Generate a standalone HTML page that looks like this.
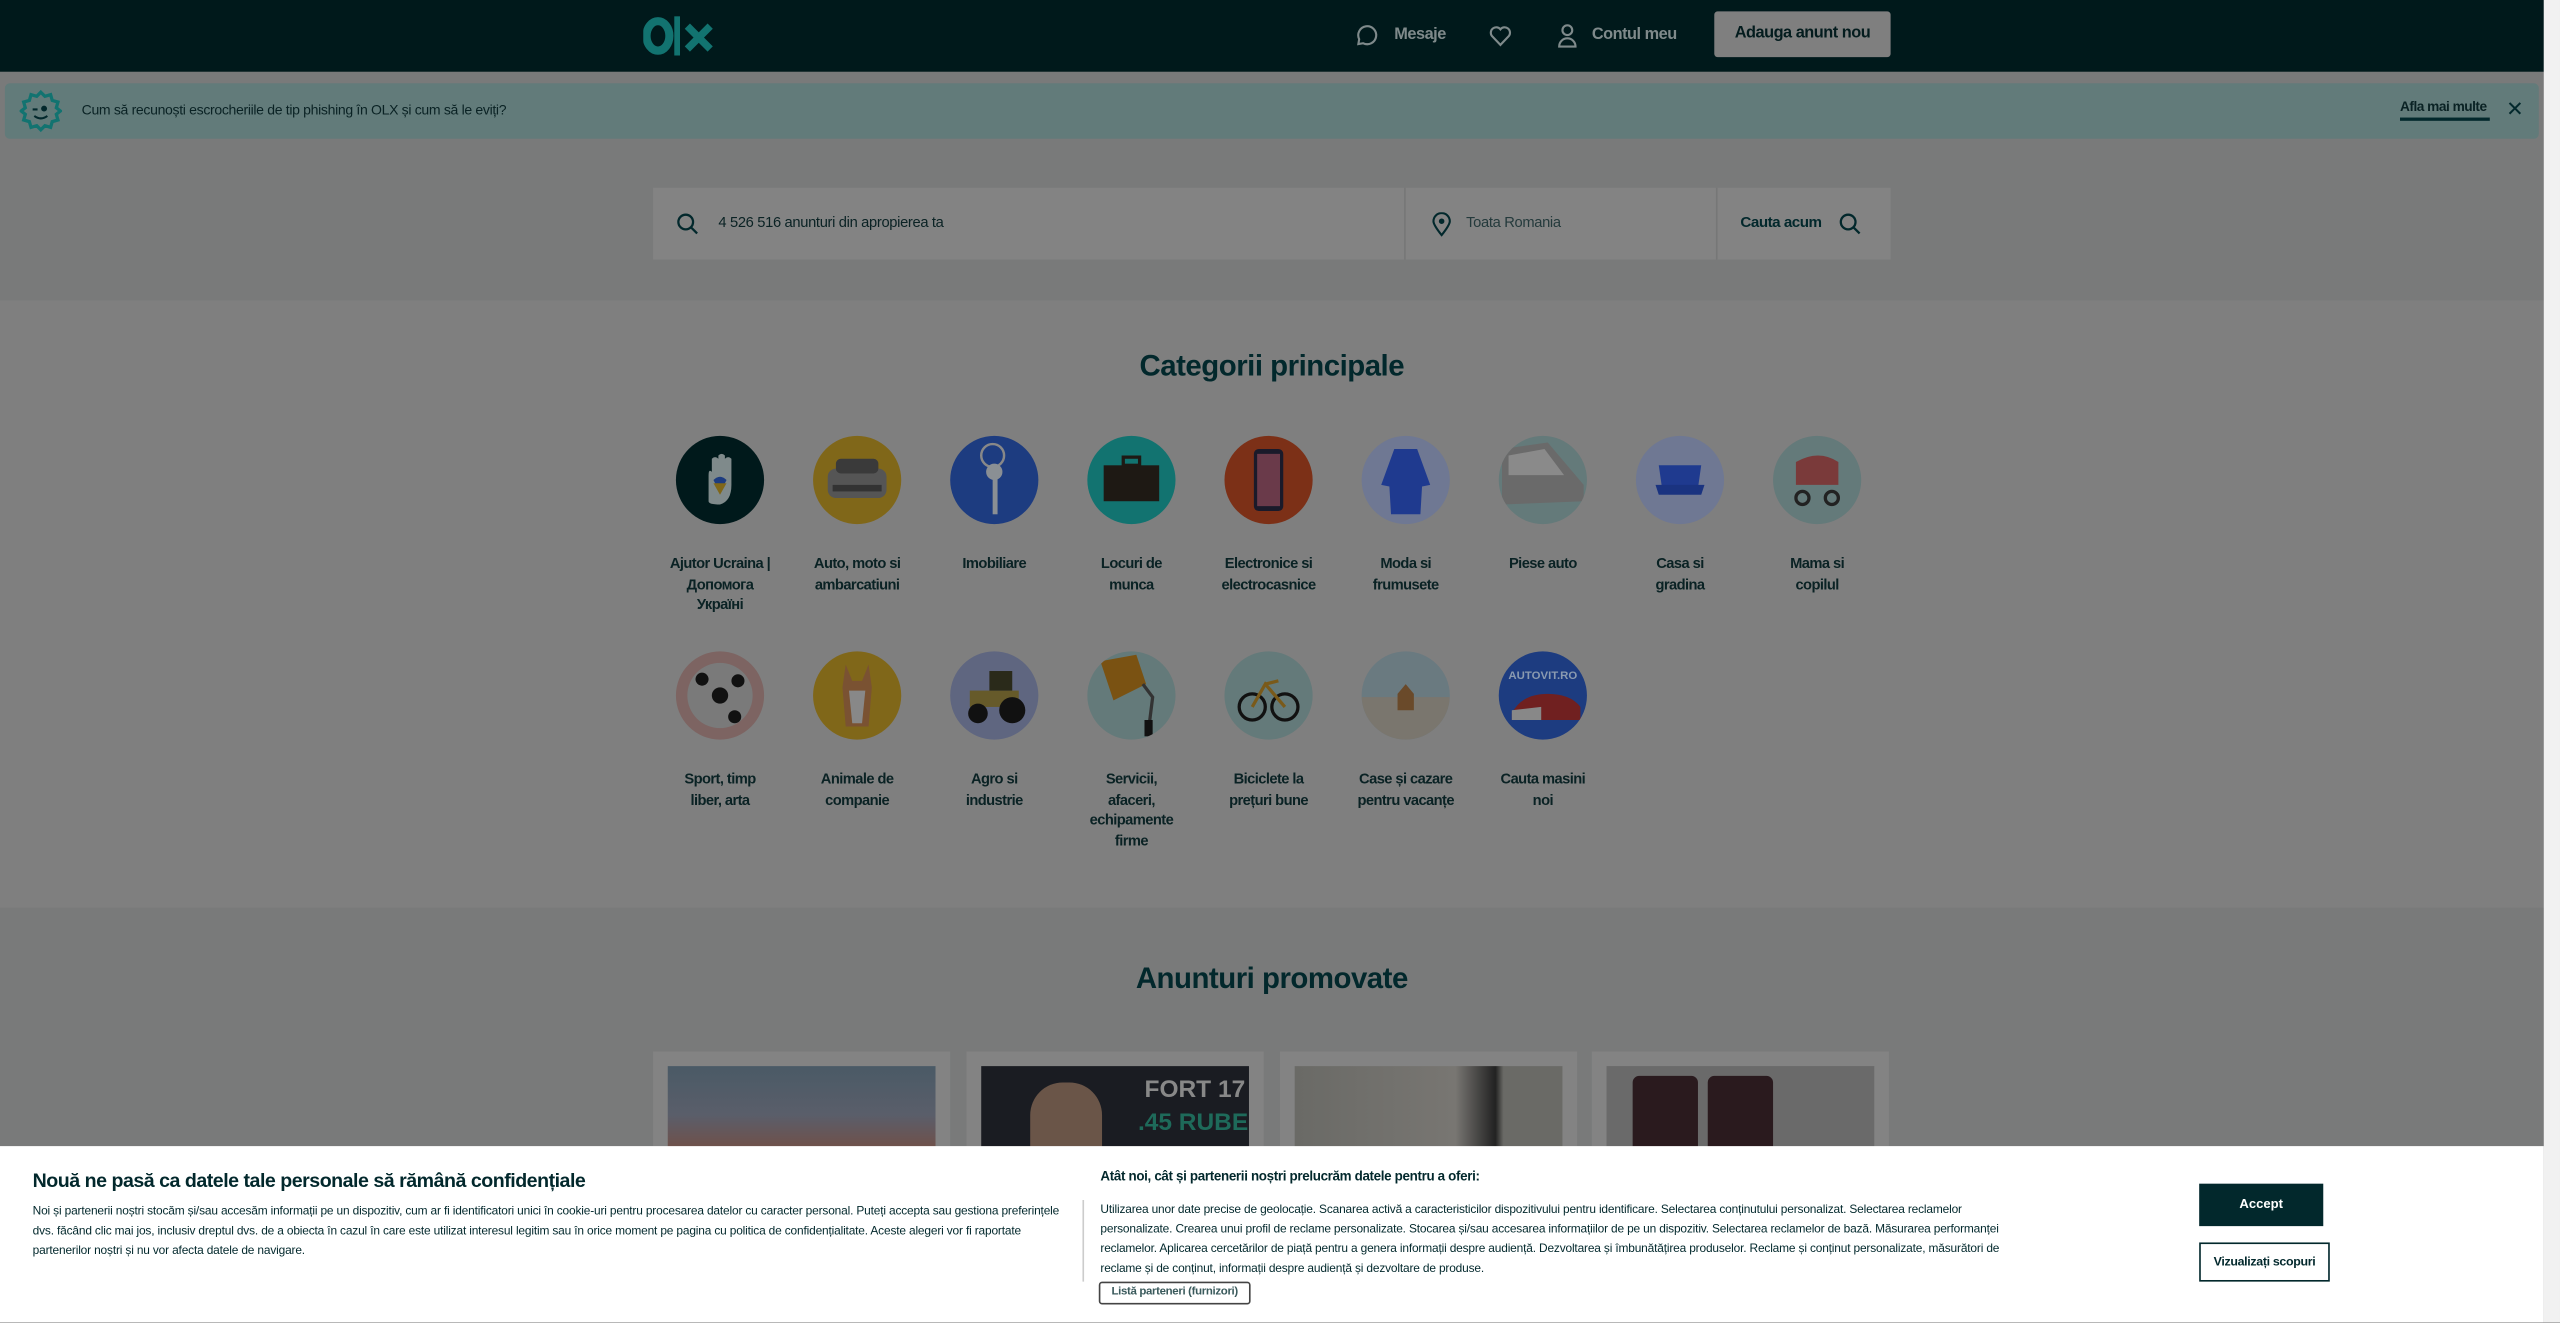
<!DOCTYPE html>
<html><head><meta charset="utf-8">
<style>
html,body{margin:0;padding:0;width:2560px;height:1323px;overflow:hidden;background:#7f7f7f;}
#w{position:absolute;left:0;top:0;width:1568px;height:810px;transform:scale(1.63265);transform-origin:0 0;font-family:"Liberation Sans",sans-serif;background:#7f7f7f;overflow:hidden}
.a{position:absolute;white-space:nowrap}
.hdr{left:0;top:0;width:1558px;height:44px;background:#00191b}
.sb{left:1558px;top:0;width:10px;height:810px;background:#f1f1f1}
.nav{color:#7f8a8b;font-size:10px;font-weight:bold;letter-spacing:-0.3px}
.cat{position:absolute;width:62px;text-align:center;font-size:9px;font-weight:bold;color:#0a2224;line-height:12.5px;letter-spacing:-0.35px}
.c{position:absolute;width:54px;height:54px;border-radius:50%;overflow:hidden}
.card{position:absolute;top:644px;width:182px;height:70px;background:#838383}
.ci{position:absolute;left:9px;top:9px;width:164px;height:60px;overflow:hidden}
.ck{left:0;top:702px;width:1558px;height:108px;background:#fff;color:#02282c;white-space:normal}
.p{font-size:7.6px;line-height:12px;color:#02282c;white-space:normal;letter-spacing:-0.1px}
</style></head><body><div id="w">
<div class="a sb"></div>
<div class="a hdr"></div>
<svg class="a" style="left:394px;top:9px" width="46" height="26" viewBox="0 0 46 26">
<ellipse cx="9" cy="13" rx="7" ry="9" fill="none" stroke="#127370" stroke-width="5"/>
<rect x="19" y="1" width="3.5" height="24" fill="#127370"/>
<path d="M27 7 L41 21 M41 7 L27 21" stroke="#127370" stroke-width="4.5"/>
</svg>
<svg class="a" style="left:830px;top:15px" width="14" height="14" viewBox="0 0 14 14"><path d="M2 12 L2.5 9 A5.5 5.5 0 1 1 5 11.5 Z" fill="none" stroke="#7f8a8b" stroke-width="1.3"/></svg>
<div class="a nav" style="left:854px;top:16px">Mesaje</div>
<svg class="a" style="left:912px;top:15px" width="14" height="14" viewBox="0 0 14 14"><path d="M7 12.5 L1.8 7 A3 3 0 0 1 7 3 A3 3 0 0 1 12.2 7 Z" fill="none" stroke="#7f8a8b" stroke-width="1.3"/></svg>
<svg class="a" style="left:953px;top:14px" width="14" height="16" viewBox="0 0 14 16"><circle cx="7" cy="4.5" r="3" fill="none" stroke="#7f8a8b" stroke-width="1.3"/><path d="M2 14.5 A5 5 0 0 1 12 14.5 Z" fill="none" stroke="#7f8a8b" stroke-width="1.3"/></svg>
<div class="a nav" style="left:975px;top:16px">Contul meu</div>
<div class="a" style="left:1050px;top:7px;width:108px;height:28px;background:#7f7f7f;border-radius:2px;color:#041c1e;font-size:10px;font-weight:bold;text-align:center;line-height:28px;letter-spacing:-0.3px">Adauga anunt nou</div>

<div class="a" style="left:0;top:44px;width:1558px;height:140px;background:#797a7a"></div>
<div class="a" style="left:3px;top:51px;width:1552px;height:34px;background:#627b7a;border-radius:3px"></div>
<svg class="a" style="left:12px;top:55px" width="26" height="26" viewBox="0 0 26 26"><path d="M13 1.5 L15.5 4 L19 3 L20 6.5 L23.5 7.5 L22.5 11 L25 13 L22.5 15 L23.5 18.5 L20 19.5 L19 23 L15.5 22 L13 24.5 L10.5 22 L7 23 L6 19.5 L2.5 18.5 L3.5 15 L1 13 L3.5 11 L2.5 7.5 L6 6.5 L7 3 L10.5 4 Z" fill="none" stroke="#127370" stroke-width="2"/><path d="M8 12 h3" stroke="#02282c" stroke-width="1.3"/><circle cx="15" cy="11.5" r="1.8" fill="#02282c"/><path d="M9 16 Q13 19 17 16" fill="none" stroke="#02282c" stroke-width="1.3"/></svg>
<div class="a" style="left:50px;top:62px;font-size:8.6px;color:#0a2224;letter-spacing:-0.2px">Cum să recunoști escrocheriile de tip phishing în OLX și cum să le eviți?</div>
<div class="a" style="left:1470px;top:60px;font-size:8.4px;font-weight:bold;color:#0a2224;letter-spacing:-0.3px">Afla mai multe</div>
<div class="a" style="left:1470px;top:72px;width:55px;height:2px;background:#02282c"></div>
<div class="a" style="left:1535px;top:59px;font-size:13px;color:#02282c">✕</div>

<div class="a" style="left:400px;top:115px;width:758px;height:44px;background:#838383"></div>
<div class="a" style="left:860px;top:115px;width:1px;height:44px;background:#767777"></div>
<div class="a" style="left:1051px;top:115px;width:1px;height:44px;background:#767777"></div>
<svg class="a" style="left:414px;top:130px" width="14" height="14" viewBox="0 0 14 14"><circle cx="6" cy="6" r="4.5" fill="none" stroke="#02282c" stroke-width="1.4"/><path d="M9.3 9.3 L13 13" stroke="#02282c" stroke-width="1.4"/></svg>
<div class="a" style="left:440px;top:131px;font-size:9px;color:#0a2224;letter-spacing:-0.2px">4 526 516 anunturi din apropierea ta</div>
<svg class="a" style="left:877px;top:130px" width="12" height="15" viewBox="0 0 12 15"><path d="M6 14 C2 9 1 7 1 5.5 A5 5 0 0 1 11 5.5 C11 7 10 9 6 14 Z" fill="none" stroke="#02282c" stroke-width="1.3"/><circle cx="6" cy="5.5" r="1.7" fill="#02282c"/></svg>
<div class="a" style="left:898px;top:131px;font-size:9px;color:#243a3c;letter-spacing:-0.2px">Toata Romania</div>
<div class="a" style="left:1066px;top:131px;font-size:9.3px;font-weight:bold;color:#02282c;letter-spacing:-0.3px">Cauta acum</div>
<svg class="a" style="left:1126px;top:130px" width="14" height="14" viewBox="0 0 14 14"><circle cx="6" cy="6" r="4.5" fill="none" stroke="#02282c" stroke-width="1.4"/><path d="M9.3 9.3 L13 13" stroke="#02282c" stroke-width="1.4"/></svg>

<div class="a" style="left:0;top:184px;width:1558px;height:372px;background:#7f7f7f"></div>
<div class="a" style="left:0;top:214px;width:1558px;text-align:center;font-size:18px;font-weight:bold;color:#02282c;letter-spacing:-0.3px">Categorii principale</div>

<div class="c" style="left:414px;top:267px;background:#00191b"><svg width="54" height="54"><path d="M20 40 V24 Q20 20 22 22 V14 Q24 12 26 14 V12 Q28 10 30 12 V14 Q32 12 34 14 V30 Q34 40 27 42 Q20 42 20 40Z" fill="#7f8a8b"/><path d="M23 27 Q27 23 31 27 L27 35 Z" fill="#1d3c80"/><path d="M23 29 L31 29 L27 36Z" fill="#806719"/></svg></div>
<div class="c" style="left:498px;top:267px;background:#806719"><svg width="54" height="54"><rect x="9" y="20" width="36" height="18" rx="5" fill="#555"/><rect x="14" y="14" width="26" height="9" rx="3" fill="#3a3a3a"/><rect x="12" y="30" width="30" height="4" fill="#333"/></svg></div>
<div class="c" style="left:582px;top:267px;background:#1d3c80"><svg width="54" height="54"><circle cx="26" cy="12" r="7" fill="none" stroke="#888" stroke-width="1.5"/><circle cx="27" cy="22" r="5" fill="#8a8f94"/><rect x="26" y="24" width="3" height="24" fill="#8a8f94"/></svg></div>
<div class="c" style="left:666px;top:267px;background:#127370"><svg width="54" height="54"><rect x="10" y="18" width="34" height="22" fill="#1e1914"/><rect x="22" y="13" width="10" height="5" fill="none" stroke="#1e1914" stroke-width="2"/></svg></div>
<div class="c" style="left:750px;top:267px;background:#7c3017"><svg width="54" height="54"><rect x="18" y="8" width="18" height="38" rx="3" fill="#1a1a2a"/><rect x="20" y="11" width="14" height="32" fill="#6a3a4a"/></svg></div>
<div class="c" style="left:834px;top:267px;background:#6f7893"><svg width="54" height="54"><path d="M20 8 L34 8 L42 30 L37 31 L36 48 L18 48 L17 31 L12 30 Z" fill="#1f3a8f"/></svg></div>
<div class="c" style="left:918px;top:267px;background:#647a7a"><svg width="54" height="54"><path d="M2 8 L30 4 L52 30 L52 40 L2 42 Z" fill="#6a6a6a"/><path d="M6 12 L28 8 L40 24 L6 24Z" fill="#8a8a8a"/></svg></div>
<div class="c" style="left:1002px;top:267px;background:#6f7893"><svg width="54" height="54"><path d="M14 18 L40 18 L38 32 L16 32 Z" fill="#1f3a8f"/><path d="M12 30 L42 30 L40 36 L14 36Z" fill="#1a3380"/></svg></div>
<div class="c" style="left:1086px;top:267px;background:#647a7a"><svg width="54" height="54"><path d="M14 16 Q28 8 40 16 L40 30 L14 30Z" fill="#7a3a3a"/><circle cx="18" cy="38" r="4" fill="none" stroke="#222" stroke-width="2"/><circle cx="36" cy="38" r="4" fill="none" stroke="#222" stroke-width="2"/></svg></div>

<div class="cat" style="left:410px;top:339px">Ajutor Ucraina | Допомога Україні</div>
<div class="cat" style="left:494px;top:339px">Auto, moto si ambarcatiuni</div>
<div class="cat" style="left:578px;top:339px">Imobiliare</div>
<div class="cat" style="left:662px;top:339px">Locuri de munca</div>
<div class="cat" style="left:741px;top:339px;width:72px">Electronice si electrocasnice</div>
<div class="cat" style="left:830px;top:339px">Moda si frumusete</div>
<div class="cat" style="left:914px;top:339px">Piese auto</div>
<div class="cat" style="left:1006px;top:339px;width:46px">Casa si gradina</div>
<div class="cat" style="left:1090px;top:339px;width:46px">Mama si copilul</div>

<div class="c" style="left:414px;top:399px;background:#7d6462"><svg width="54" height="54"><circle cx="27" cy="27" r="20" fill="#7a7a7a"/><circle cx="27" cy="27" r="5" fill="#111"/><circle cx="16" cy="17" r="4" fill="#111"/><circle cx="38" cy="18" r="4" fill="#111"/><circle cx="36" cy="40" r="4" fill="#111"/></svg></div>
<div class="c" style="left:498px;top:399px;background:#806719"><svg width="54" height="54"><path d="M20 8 L24 18 L30 18 L34 8 L36 22 L34 46 L20 46 L18 22 Z" fill="#7a5232"/><path d="M22 24 L32 24 L30 44 L24 44Z" fill="#888"/></svg></div>
<div class="c" style="left:582px;top:399px;background:#5f6680"><svg width="54" height="54"><rect x="12" y="24" width="30" height="10" fill="#665a2a"/><rect x="24" y="12" width="14" height="12" fill="#2a2a1a"/><circle cx="17" cy="38" r="6" fill="#111"/><circle cx="38" cy="36" r="8" fill="#111"/></svg></div>
<div class="c" style="left:666px;top:399px;background:#647a7a"><svg width="54" height="54"><path d="M8 6 L30 2 L36 20 L16 30 Z" fill="#7a5212"/><path d="M34 20 L40 28 L38 44" fill="none" stroke="#333" stroke-width="2"/><rect x="35" y="42" width="5" height="10" fill="#111"/></svg></div>
<div class="c" style="left:750px;top:399px;background:#647a7a"><svg width="54" height="54"><circle cx="17" cy="34" r="8" fill="none" stroke="#111" stroke-width="2"/><circle cx="37" cy="34" r="8" fill="none" stroke="#111" stroke-width="2"/><path d="M17 34 L25 20 L37 34 M25 20 L33 18" stroke="#7a5a1a" stroke-width="2" fill="none"/></svg></div>
<div class="c" style="left:834px;top:399px;background:#6a7a80"><svg width="54" height="54"><rect x="0" y="28" width="54" height="26" fill="#7a766e"/><path d="M22 26 L27 20 L32 26 L32 36 L22 36Z" fill="#6a4a2a"/></svg></div>
<div class="c" style="left:918px;top:399px;background:#1d3c80"><svg width="54" height="54"><text x="27" y="17" text-anchor="middle" font-family="Liberation Sans" font-size="7" font-weight="bold" fill="#8a9ab0">AUTOVIT.RO</text><path d="M8 38 Q14 26 30 26 Q44 26 50 34 L50 42 L8 42Z" fill="#702020"/><path d="M8 36 L26 34 L26 42 L8 42Z" fill="#888"/></svg></div>

<div class="cat" style="left:410px;top:471px">Sport, timp liber, arta</div>
<div class="cat" style="left:494px;top:471px">Animale de companie</div>
<div class="cat" style="left:578px;top:471px">Agro si industrie</div>
<div class="cat" style="left:662px;top:471px">Servicii, afaceri, echipamente firme</div>
<div class="cat" style="left:746px;top:471px">Biciclete la prețuri bune</div>
<div class="cat" style="left:830px;top:471px">Case și cazare pentru vacanțe</div>
<div class="cat" style="left:914px;top:471px">Cauta masini noi</div>

<div class="a" style="left:0;top:556px;width:1558px;height:146px;background:#797a7a"></div>
<div class="a" style="left:0;top:589px;width:1558px;text-align:center;font-size:18px;font-weight:bold;color:#02282c;letter-spacing:-0.3px">Anunturi promovate</div>
<div class="card" style="left:400px"><div class="ci" style="background:linear-gradient(#4a5a66,#5a5e6a 50%,#7a4a3a)"></div></div>
<div class="card" style="left:592px"><div class="ci" style="background:#1a1c22"><div style="position:absolute;left:30px;top:10px;width:44px;height:50px;border-radius:20px 20px 0 0;background:#6a5548"></div><div style="position:absolute;left:100px;top:6px;font:bold 15px 'Liberation Sans';color:#888;white-space:nowrap">FORT 17</div><div style="position:absolute;left:96px;top:26px;font:bold 15px 'Liberation Sans';color:#1e6a5a;white-space:nowrap">.45 RUBE</div></div></div>
<div class="card" style="left:784px"><div class="ci" style="background:linear-gradient(90deg,#6a6a66,#787672 60%,#222 75%,#6a6a66 78%)"></div></div>
<div class="card" style="left:975px"><div class="ci" style="background:#6a6a6a"><div style="position:absolute;left:16px;top:6px;width:40px;height:60px;background:#2a1a1e;border-radius:4px"></div><div style="position:absolute;left:62px;top:6px;width:40px;height:60px;background:#2a1a1e;border-radius:4px"></div></div></div>

<div class="a ck">
<div class="a" style="left:20px;top:14px;font-size:12px;font-weight:bold;color:#02282c;letter-spacing:-0.3px">Nouă ne pasă ca datele tale personale să rămână confidențiale</div>
<div class="a p" style="left:20px;top:34px;width:630px;font-size:7.3px">Noi și partenerii noștri stocăm și/sau accesăm informații pe un dispozitiv, cum ar fi identificatori unici în cookie-uri pentru procesarea datelor cu caracter personal. Puteți accepta sau gestiona preferințele dvs. făcând clic mai jos, inclusiv dreptul dvs. de a obiecta în cazul în care este utilizat interesul legitim sau în orice moment pe pagina cu politica de confidențialitate. Aceste alegeri vor fi raportate partenerilor noștri și nu vor afecta datele de navigare.</div>
<div class="a" style="left:663px;top:33px;width:1px;height:50px;background:#ccc"></div>
<div class="a" style="left:674px;top:14px;font-size:8.2px;font-weight:bold;color:#02282c;letter-spacing:-0.2px">Atât noi, cât și partenerii noștri prelucrăm datele pentru a oferi:</div>
<div class="a p" style="left:674px;top:33px;width:570px;font-size:7.3px">Utilizarea unor date precise de geolocație. Scanarea activă a caracteristicilor dispozitivului pentru identificare. Selectarea conținutului personalizat. Selectarea reclamelor personalizate. Crearea unui profil de reclame personalizate. Stocarea și/sau accesarea informațiilor de pe un dispozitiv. Selectarea reclamelor de bază. Măsurarea performanței reclamelor. Aplicarea cercetărilor de piață pentru a genera informații despre audiență. Dezvoltarea și îmbunătățirea produselor. Reclame și conținut personalizate, măsurători de reclame și de conținut, informații despre audiență și dezvoltare de produse.</div>
<div class="a" style="left:673px;top:83px;width:91px;height:12px;border:1.3px solid #444;border-radius:2px;font-size:7px;font-weight:bold;color:#3a5a5c;line-height:12px;text-align:center;letter-spacing:-0.2px">Listă parteneri (furnizori)</div>
<div class="a" style="left:1347px;top:23px;width:76px;height:26px;background:#02282c;color:#fff;font-size:8px;font-weight:bold;text-align:center;line-height:26px">Accept</div>
<div class="a" style="left:1347px;top:59px;width:78px;height:22px;border:1px solid #02282c;color:#02282c;font-size:7.6px;font-weight:bold;text-align:center;line-height:22px;letter-spacing:-0.2px">Vizualizați scopuri</div>
</div>
</div></body></html>
